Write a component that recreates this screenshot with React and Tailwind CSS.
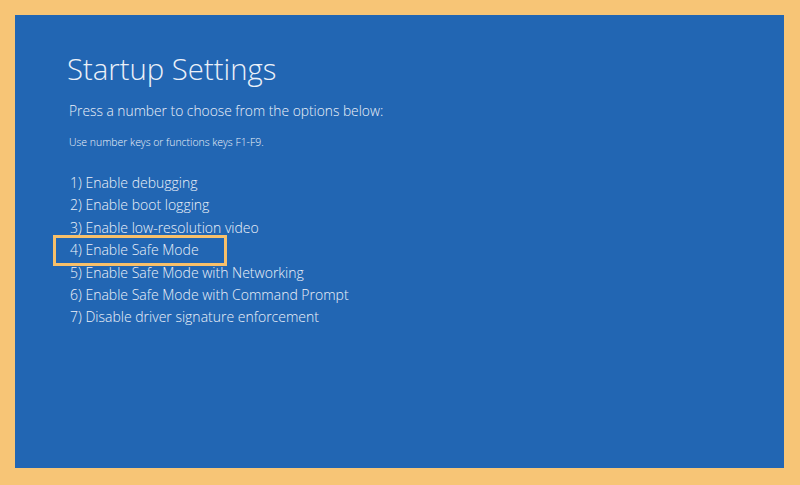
export default function App() {
  const items = [
    "1) Enable debugging",
    "2) Enable boot logging",
    "3) Enable low-resolution video",
    "4) Enable Safe Mode",
    "5) Enable Safe Mode with Networking",
    "6) Enable Safe Mode with Command Prompt",
    "7) Disable driver signature enforcement",
  ];
  return (
    <div className="w-[800px] h-[485px] bg-[#f7c576] pt-[15px] pl-[15px] pr-[16px] pb-[17px]">
      <div
        className="w-full h-full bg-[#2266b3] text-[#ecf1f9] pl-[52px] pt-[34px]"
        style={{ fontFamily: '"Open Sans", "Noto Sans", sans-serif' }}
      >
        <h1 className="text-[29.3px] font-light leading-[40px]">Startup Settings</h1>
        <p className="mt-[12px] ml-[2px] text-[13.8px] font-light leading-[20px]">
          Press a number to choose from the options below:
        </p>
        <p className="mt-[14px] ml-[2px] text-[10.45px] font-light leading-[14px]">
          Use number keys or functions keys F1-F9.
        </p>
        <ul className="mt-[23px] ml-[3px] flex flex-col">
          {items.map((t, i) => (
            <li key={i} className="relative text-[14px] font-light leading-[22.4px] whitespace-nowrap">
              {t}
              {i === 3 && (
                <span className="absolute left-[-17px] top-[-4px] w-[174px] h-[31px] border-[3px] border-[#f8c06a]" />
              )}
            </li>
          ))}
        </ul>
      </div>
    </div>
  );
}
